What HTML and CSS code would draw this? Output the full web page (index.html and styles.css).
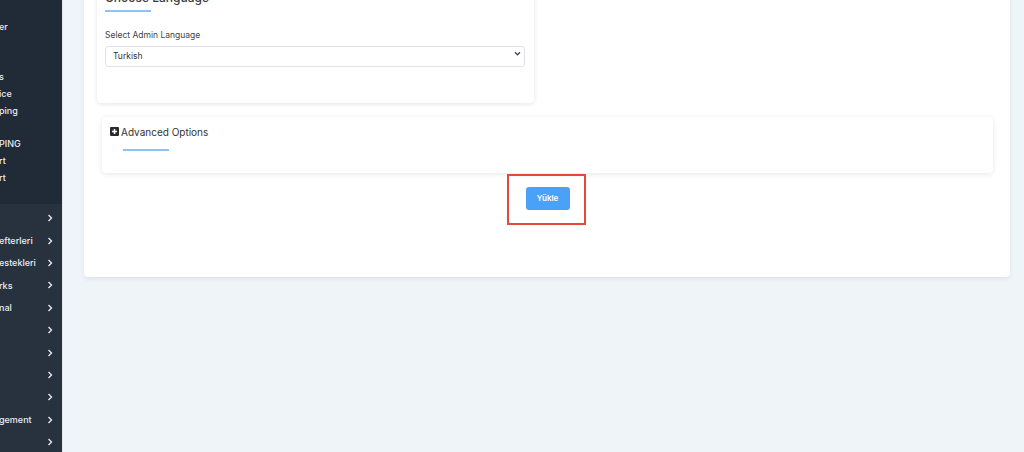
FILE: index.html
```html
<!DOCTYPE html>
<html lang="en">
<head>
  <meta charset="UTF-8" />
  <meta name="viewport" content="width=device-width, initial-scale=1.0"/>
  <title>Language Settings</title>
  <link rel="stylesheet" href="styles.css">
</head>
<body>

  <!-- Sidebar (scrolled off to the left) -->
  <aside class="sidebar">
    <ul class="submenu">
      <li></li>
      <li>er</li>
      <li></li>
      <li></li>
      <li>s</li>
      <li>ice</li>
      <li>ping</li>
      <li></li>
      <li>PING</li>
      <li>rt</li>
      <li>rt</li>
    </ul>
    <ul class="menu">
      <li><span></span><svg class="chev" viewBox="0 0 6 8"><path d="M1.5 1 L4.5 4 L1.5 7"/></svg></li>
      <li><span>efterleri</span><svg class="chev" viewBox="0 0 6 8"><path d="M1.5 1 L4.5 4 L1.5 7"/></svg></li>
      <li><span>estekleri</span><svg class="chev" viewBox="0 0 6 8"><path d="M1.5 1 L4.5 4 L1.5 7"/></svg></li>
      <li><span>rks</span><svg class="chev" viewBox="0 0 6 8"><path d="M1.5 1 L4.5 4 L1.5 7"/></svg></li>
      <li><span>nal</span><svg class="chev" viewBox="0 0 6 8"><path d="M1.5 1 L4.5 4 L1.5 7"/></svg></li>
      <li><span></span><svg class="chev" viewBox="0 0 6 8"><path d="M1.5 1 L4.5 4 L1.5 7"/></svg></li>
      <li><span></span><svg class="chev" viewBox="0 0 6 8"><path d="M1.5 1 L4.5 4 L1.5 7"/></svg></li>
      <li><span></span><svg class="chev" viewBox="0 0 6 8"><path d="M1.5 1 L4.5 4 L1.5 7"/></svg></li>
      <li><span></span><svg class="chev" viewBox="0 0 6 8"><path d="M1.5 1 L4.5 4 L1.5 7"/></svg></li>
      <li><span>gement</span><svg class="chev" viewBox="0 0 6 8"><path d="M1.5 1 L4.5 4 L1.5 7"/></svg></li>
      <li><span></span><svg class="chev" viewBox="0 0 6 8"><path d="M1.5 1 L4.5 4 L1.5 7"/></svg></li>
    </ul>
  </aside>

  <main class="content">
    <div class="card">

      <!-- Choose Language -->
      <div class="lang-card">
        <h4 class="section-title">Choose Language</h4>
        <div class="title-line"></div>
        <label class="field-label" for="adminLang">Select Admin Language</label>
        <div class="select-wrap">
          <select id="adminLang" class="select">
            <option>Turkish</option>
            <option>English</option>
          </select>
          <svg class="select-arrow" viewBox="0 0 8 6"><path d="M1 1.5 L4 4.5 L7 1.5"/></svg>
        </div>
      </div>

      <!-- Advanced Options -->
      <div class="adv-card">
        <div class="adv-title">
          <svg class="plus-icon" viewBox="0 0 10 10">
            <rect x="0" y="0" width="10" height="10" rx="1.2" fill="#2b2b2b"/>
            <path d="M5 2.2 V7.8 M2.2 5 H7.8" stroke="#fff" stroke-width="1.7"/>
          </svg>
          <span>Advanced Options</span>
        </div>
        <div class="title-line adv-line"></div>
      </div>

      <div class="submit-row">
        <div class="highlight">
          <button class="submit-button">Yükle</button>
        </div>
      </div>

    </div>
  </main>

</body>
</html>
```

FILE: styles.css
```css
* {
  box-sizing: border-box;
}

body {
  margin: 0;
  height: 100vh;
  display: flex;
  overflow: hidden;
  font-family: Inter, "Noto Sans", sans-serif;
  background-color: #eff4f8;
  color: #333;
}

/* Sidebar */
.sidebar {
  width: 63px;
  flex-shrink: 0;
  display: flex;
  flex-direction: column;
  background-color: #28323f;
  border-right: 1px solid #e4e9ee;
  overflow: hidden;
  color: #e9ecf0;
  font-size: 9px;
  font-weight: 500;
}

.sidebar ul {
  list-style: none;
  margin: 0;
  padding: 0;
  flex-shrink: 0;
}

.submenu {
  background-color: #212a37;
  height: 204px;
  padding-top: 2px !important;
}

.submenu li {
  height: 16.8px;
  line-height: 16.8px;
  margin-left: -1px;
  white-space: nowrap;
}

.menu {
  padding-top: 3px !important;
}

.menu li {
  height: 22.4px;
  display: flex;
  align-items: center;
  justify-content: space-between;
  padding-right: 9px;
  white-space: nowrap;
}

.menu li span {
  margin-left: -1px;
}

.chev {
  width: 6px;
  height: 8px;
  fill: none;
  stroke: #e3e7ec;
  stroke-width: 1.4;
}

/* Main */
.content {
  flex: 1;
  padding: 0 14px 0 21px;
}

.card {
  margin-top: -33px;
  background-color: #fff;
  border-radius: 4px;
  box-shadow: 0 2px 4px rgba(30, 50, 80, 0.08);
  padding: 13px 17px 52px 13px;
}

.lang-card {
  width: 437px;
  background-color: #fff;
  border-radius: 4px;
  box-shadow: 0 1px 5px rgba(0, 0, 0, 0.1);
  padding: 8px 9px 36px 8px;
}

.section-title {
  margin: 0;
  font-size: 12px;
  font-weight: 500;
  line-height: 20px;
  color: #3a3a3a;
}

.title-line {
  width: 46px;
  height: 2px;
  margin-top: 2px;
  background-color: #8fc1f7;
}

.field-label {
  display: block;
  margin-top: 16px;
  font-size: 8.5px;
  line-height: 14px;
  color: #444;
}

.select-wrap {
  position: relative;
  margin-top: 1px;
}

.select {
  width: 100%;
  height: 21px;
  -webkit-appearance: none;
  appearance: none;
  border: 1px solid #dfe3e8;
  border-radius: 3px;
  background-color: #fff;
  padding: 0 7px;
  font-family: inherit;
  font-size: 8.5px;
  color: #333;
}

.select-arrow {
  position: absolute;
  right: 4px;
  top: 8px;
  width: 7px;
  height: 5px;
  fill: none;
  stroke: #444;
  stroke-width: 1.5;
}

.adv-card {
  margin: 14px 0 0 5px;
  background-color: #fff;
  border-radius: 4px;
  box-shadow: 0 1px 5px rgba(0, 0, 0, 0.1);
  padding: 8px 8px 22px 8px;
}

.adv-title {
  display: flex;
  align-items: center;
  gap: 2px;
  font-size: 10px;
  line-height: 14px;
  color: #333;
}

.plus-icon {
  width: 9px;
  height: 9px;
}

.adv-line {
  margin: 10px 0 0 13px;
}

.submit-row {
  display: flex;
  justify-content: center;
  margin-top: 1px;
  margin-left: 5px;
}

.highlight {
  border: 2px solid #e8473c;
  padding: 11px 14px 13px 17px;
  margin-left: -3px;
}

.submit-button {
  display: block;
  width: 44px;
  height: 23px;
  border: none;
  border-radius: 3px;
  background-color: #4aa1f8;
  color: #fff;
  font-family: inherit;
  font-size: 8px;
  font-weight: 600;
  cursor: pointer;
}
```
